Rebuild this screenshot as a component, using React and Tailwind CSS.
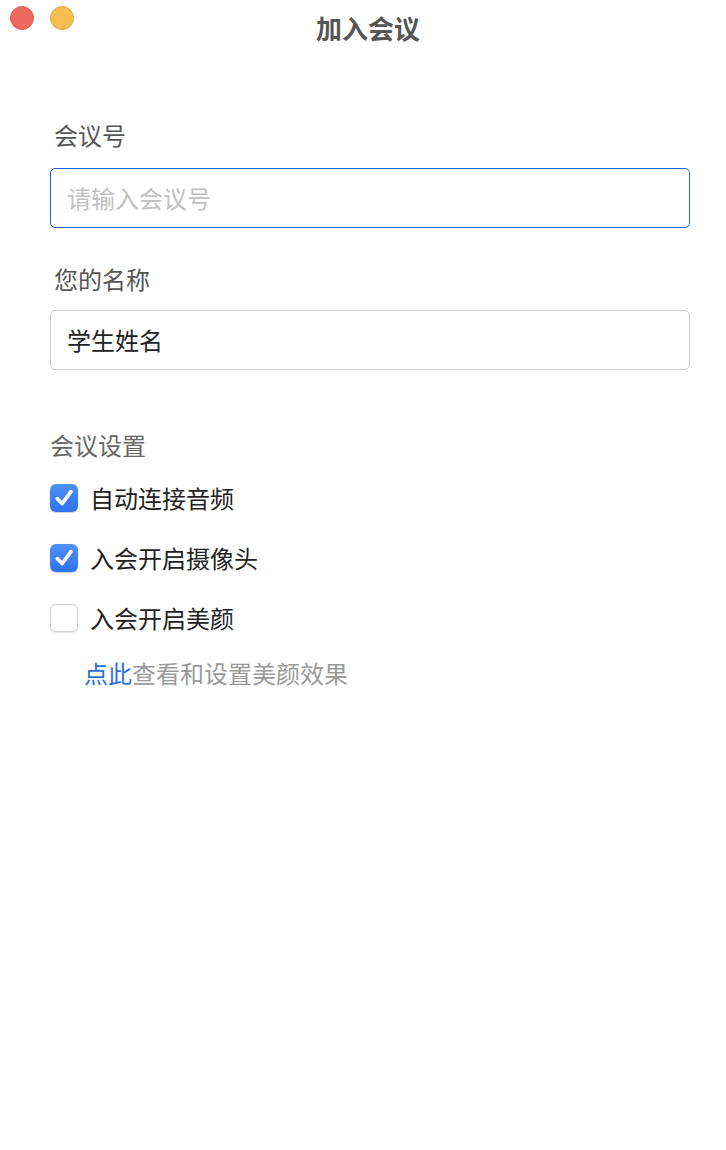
import React from "react";

function Check({ checked }) {
  if (checked) {
    return (
      <div className="w-[28px] h-[28px] rounded-[6px] bg-gradient-to-b from-[#4f8ff9] to-[#2f73ef] flex items-center justify-center shrink-0 shadow-[0_0.5px_1px_rgba(0,0,0,0.2)]">
        <svg width="28" height="28" viewBox="0 0 28 28" fill="none">
          <path d="M7.2 14.6 L12 19.6 L21 7.6" stroke="white" strokeWidth="3.6" strokeLinecap="round" strokeLinejoin="round" />
        </svg>
      </div>
    );
  }
  return <div className="w-[28px] h-[28px] rounded-[6px] bg-white border border-[#cfcfcf] shrink-0 shadow-[0_0.5px_1px_rgba(0,0,0,0.08)]" />;
}

function Row({ checked, label }) {
  return (
    <div className="flex items-center h-[32px] gap-[12px]">
      <Check checked={checked} />
      <span className="text-[24px] leading-[32px] text-[#222222]">{label}</span>
    </div>
  );
}

export default function App() {
  return (
    <div
      className="w-[726px] h-[1150px] bg-white flex flex-col"
      style={{ fontFamily: '"PingFang SC", "Noto Sans CJK SC", "Noto Sans", sans-serif' }}
    >
      <div className="h-[56px] grid grid-cols-[1fr_auto_1fr] items-start">
        <div className="flex gap-[16px] pl-[10px] pt-[6px]">
          <div className="w-[24px] h-[24px] rounded-full bg-[#ee6a5f] border border-[#dc5a50]" />
          <div className="w-[24px] h-[24px] rounded-full bg-[#f5be4f] border border-[#dfa73c]" />
        </div>
        <div className="pt-[10px] ml-[10px] text-[26px] leading-[36px] font-bold text-[#555555]">加入会议</div>
        <div />
      </div>

      <div className="flex flex-col pl-[50px] pr-[36px]">
        <div className="mt-[63px] pl-[4px] text-[24px] leading-[32px] text-[#555555]">会议号</div>
        <div className="mt-[17px] h-[60px] border border-[#1f5fdc] rounded-[5px] flex items-center px-[16px] text-[24px] text-[#c0c0c0]">
          请输入会议号
        </div>

        <div className="mt-[35px] pl-[4px] text-[24px] leading-[32px] text-[#555555]">您的名称</div>
        <div className="mt-[15px] h-[60px] border border-[#cdcdcd] rounded-[5px] flex items-center px-[16px] text-[24px] text-[#222222]">
          学生姓名
        </div>

        <div className="mt-[59px] text-[24px] leading-[32px] text-[#666666]">会议设置</div>
        <div className="mt-[21px] flex flex-col gap-[28px]">
          <Row checked label="自动连接音频" />
          <Row checked label="入会开启摄像头" />
          <Row checked={false} label="入会开启美颜" />
        </div>
        <div className="mt-[23px] pl-[34px] text-[24px] leading-[32px] text-[#999999]">
          <span className="text-[#2b6fe6]">点此</span>查看和设置美颜效果
        </div>
      </div>
    </div>
  );
}
